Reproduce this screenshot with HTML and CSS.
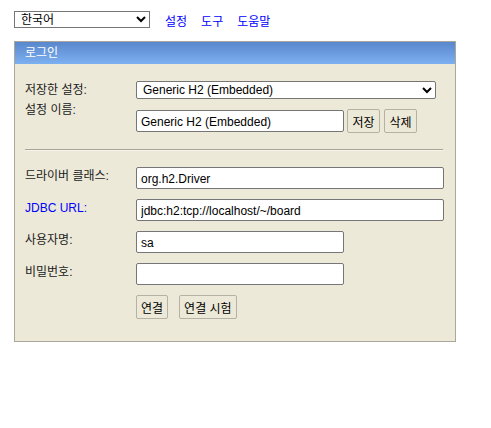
FILE: index.html
```html
<!DOCTYPE html>
<html lang="ko">
<head>
<meta charset="utf-8">
<title>H2 Console</title>
<link rel="stylesheet" href="styles.css">
</head>
<body>
<div class="topbar">
  <select class="lang">
    <option>한국어</option>
  </select>
  <nav class="links">
    <a href="#">설정</a>
    <a href="#">도구</a>
    <a href="#">도움말</a>
  </nav>
</div>
<div class="login">
  <div class="login-head">로그인</div>
  <div class="login-body">
    <div class="row row-first">
      <label class="lbl">저장한 설정:</label>
      <select class="setting">
        <option>Generic H2 (Embedded)</option>
      </select>
    </div>
    <div class="row row-name">
      <label class="lbl lbl-top">설정 이름:</label>
      <input class="field short" type="text" value="Generic H2 (Embedded)">
      <button class="btn btn-side" type="button">저장</button>
      <button class="btn btn-side" type="button">삭제</button>
    </div>
    <div class="sep"></div>
    <div class="row row-field">
      <label class="lbl">드라이버 클래스:</label>
      <input class="field long" type="text" value="org.h2.Driver">
    </div>
    <div class="row row-field">
      <a class="lbl lbl-link" href="#">JDBC URL:</a>
      <input class="field long" type="text" value="jdbc:h2:tcp://localhost/~/board">
    </div>
    <div class="row row-field">
      <label class="lbl">사용자명:</label>
      <input class="field short" type="text" value="sa">
    </div>
    <div class="row row-field">
      <label class="lbl">비밀번호:</label>
      <input class="field short" type="password" value="">
    </div>
    <div class="row row-buttons">
      <button class="btn" type="button">연결</button>
      <button class="btn btn-gap" type="button">연결 시험</button>
    </div>
  </div>
</div>
</body>
</html>
```
FILE: styles.css
```css
html, body {
  margin: 0;
  padding: 0;
  background: #ffffff;
}
body {
  padding: 11px 0 0 14px;
  font-family: "Liberation Sans", Arial, "Noto Sans CJK KR", sans-serif;
  font-size: 12px;
  color: #000;
}
.topbar {
  display: flex;
  align-items: center;
  height: 17px;
}
.lang {
  width: 136px;
  height: 17px;
  margin: 0;
  padding: 0 0 0 2px;
  font-family: inherit;
  font-size: 12px;
  border: 1px solid #767676;
  border-radius: 0;
  background: #fff;
  color: #000;
}
.links {
  display: flex;
  gap: 14px;
  margin-left: 15px;
  padding-top: 1px;
}
.links a {
  color: #0000ff;
  text-decoration: none;
  font-size: 12px;
}
.login {
  margin-top: 13px;
  width: 440px;
  height: 299px;
  border: 1px solid #aca899;
  background: #ece9d8;
}
.login-head {
  height: 22px;
  line-height: 22px;
  padding-left: 10px;
  color: #fff;
  font-size: 12px;
  background: linear-gradient(to bottom, #5a87cc, #7cb0f1);
}
.login-body {
  padding: 0 0 0 10px;
}
.row {
  display: flex;
  align-items: flex-start;
}
.row-first {
  margin-top: 17px;
  align-items: center;
}
.row-name {
  margin-top: 10px;
  align-items: center;
}
.row-field {
  margin-top: 10px;
}
.sep + .row-field {
  margin-top: 16px;
}
.row-buttons {
  margin-top: 10px;
  padding-left: 111px;
}
.lbl {
  width: 111px;
  flex: none;
  font-size: 12px;
  line-height: 14px;
  padding-top: 2px;
  color: #1a1a1a;
}
.lbl-top {
  align-self: flex-start;
  margin-top: -8px;
}
.lbl-link {
  color: #0000ff;
  text-decoration: none;
}
.row-first .lbl {
  padding-top: 0;
}
.setting {
  width: 300px;
  height: 18px;
  margin: 0;
  padding: 0 0 0 2px;
  font-family: inherit;
  font-size: 12px;
  border: 1px solid #767676;
  border-radius: 2px;
  background: #fff;
  color: #000;
}
.field {
  box-sizing: border-box;
  height: 22px;
  margin: 0;
  padding: 1px 4px 0;
  font-family: inherit;
  font-size: 12px;
  border: 1px solid #767676;
  border-radius: 2px;
  background: #fff;
  color: #000;
  outline: none;
}
.short {
  width: 208px;
}
.long {
  width: 308px;
}
.btn {
  box-sizing: border-box;
  height: 24px;
  margin: 0;
  padding: 0 4px;
  font-family: inherit;
  font-size: 12px;
  color: #000;
  background: #ece9d8;
  border: 1px solid #b5b2a5;
  border-radius: 2px;
}
.btn-side {
  margin-left: 3px;
  width: 33px;
  padding: 0;
}
.btn-side + .btn-side {
  margin-left: 4px;
}
.btn-gap {
  margin-left: 11px;
}
.sep {
  margin-top: 16px;
  width: 418px;
  height: 1px;
  background: #a8a596;
  border-bottom: 1px solid #f6f4ec;
}
```
